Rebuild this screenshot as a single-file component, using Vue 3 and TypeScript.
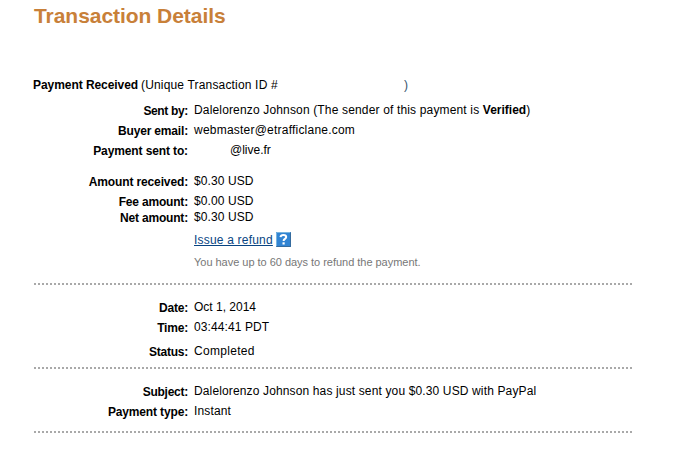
<script setup lang="ts">
interface Row {
  label: string
  value: string
  height: number
  labelTracking: number
  tracking: number
  offset?: boolean
  strong?: string
  tail?: string
}
const payment: Row[] = [
  { label: 'Sent by:', value: 'Dalelorenzo Johnson (The sender of this payment is ', strong: 'Verified', tail: ')', height: 20, labelTracking: -0.34, tracking: 0.157 },
  { label: 'Buyer email:', value: 'webmaster@etrafficlane.com', height: 20, labelTracking: -0.17, tracking: 0.22 },
  { label: 'Payment sent to:', value: '@live.fr', offset: true, height: 31, labelTracking: -0.12, tracking: 0 },
  { label: 'Amount received:', value: '$0.30 USD', height: 20, labelTracking: -0.13, tracking: 0.1 },
  { label: 'Fee amount:', value: '$0.00 USD', height: 16, labelTracking: -0.18, tracking: 0.1 },
  { label: 'Net amount:', value: '$0.30 USD', height: 23, labelTracking: -0.18, tracking: 0.1 },
]
const timing: Row[] = [
  { label: 'Date:', value: 'Oct 1, 2014', height: 20, labelTracking: -0.2, tracking: 0 },
  { label: 'Time:', value: '03:44:41 PDT', height: 24, labelTracking: -0.2, tracking: 0.1 },
  { label: 'Status:', value: 'Completed', height: 24, labelTracking: -0.25, tracking: 0.3 },
]
const subject: Row[] = [
  { label: 'Subject:', value: 'Dalelorenzo Johnson has just sent you $0.30 USD with PayPal', height: 20, labelTracking: -0.25, tracking: 0.137 },
  { label: 'Payment type:', value: 'Instant', height: 28, labelTracking: -0.15, tracking: 0.15 },
]
const sections = [
  { name: 'payment', rows: payment },
  { name: 'timing', rows: timing },
  { name: 'subject', rows: subject },
]
</script>

<template>
  <main class="page">
    <h1>Transaction Details</h1>
    <p class="intro"><b>Payment Received</b><span class="unique">(Unique Transaction ID #</span><span class="close">)</span></p>
    <section v-for="section in sections" :key="section.name" :class="section.name">
      <div v-for="row in section.rows" :key="row.label" class="row" :style="{ height: row.height + 'px' }">
        <b class="label" :style="{ letterSpacing: row.labelTracking + 'px' }">{{ row.label }}</b>
        <span class="value" :class="{ offset: row.offset }" :style="{ letterSpacing: row.tracking + 'px' }">{{ row.value }}<b v-if="row.strong">{{ row.strong }}</b>{{ row.tail }}</span>
      </div>
      <template v-if="section.name === 'payment'">
        <div class="refund">
          <a>Issue a refund</a>
          <svg width="15" height="15" viewBox="0 0 15 15" aria-hidden="true">
            <rect width="15" height="15" fill="#3184d3" />
            <path d="M.5 14.5V.5H14.5" fill="none" stroke="#79b5df" />
            <path d="M14.5 .5V14.5H.5" fill="none" stroke="#356b9d" />
            <path d="M4.5 5.2Q4.8 3 7.4 3Q10.2 3 10.2 5.1Q10.2 6.3 8.8 7Q7.6 7.6 7.6 9" fill="none" stroke="#fff" stroke-width="2" />
            <rect x="6.5" y="10.3" width="2.2" height="2.2" fill="#fff" />
          </svg>
        </div>
        <p class="note">You have up to 60 days to refund the payment.</p>
      </template>
    </section>
  </main>
</template>

<style>
body { background: #fff; }
</style>
<style scoped>
.page { box-sizing: border-box; width: 694px; height: 454px; padding: 4px 61px 0 33px; font: 12px/16px "Liberation Sans", Arial, sans-serif; color: #000; overflow: hidden; }
h1 { margin: 0; padding-left: 1px; height: 73px; font-size: 21px; line-height: 24px; letter-spacing: -.05px; color: #c88039; }
p { margin: 0; }
.intro { display: flex; height: 25px; white-space: nowrap; }
.intro b { width: 105px; letter-spacing: -.06px; }
.unique { width: 137px; margin-left: 3px; letter-spacing: .17px; }
.close { margin-left: 126px; color: #34536c; }
section { box-sizing: border-box; background: repeating-linear-gradient(to right, transparent 0 1px, #a9a9a9 1px 3px, transparent 3px 4px) left bottom / 100% 2px no-repeat; }
.payment { height: 183px; }
.timing { height: 84px; padding-top: 14px; }
.subject { height: 64px; padding-top: 14px; }
.row { display: flex; white-space: nowrap; }
.label { width: 155px; flex: none; text-align: right; padding-top: 1px; }
.value { margin-left: 6px; }
.value b { letter-spacing: 0; }
.offset { padding-left: 36px; }
.refund { display: flex; height: 22px; margin-left: 161px; }
.refund a { width: 79px; white-space: nowrap; letter-spacing: .2px; color: #084482; text-decoration: underline; }
.refund svg { margin-left: 3px; }
.note { margin-left: 161px; font-size: 11px; letter-spacing: -.025px; color: #777; }
</style>
